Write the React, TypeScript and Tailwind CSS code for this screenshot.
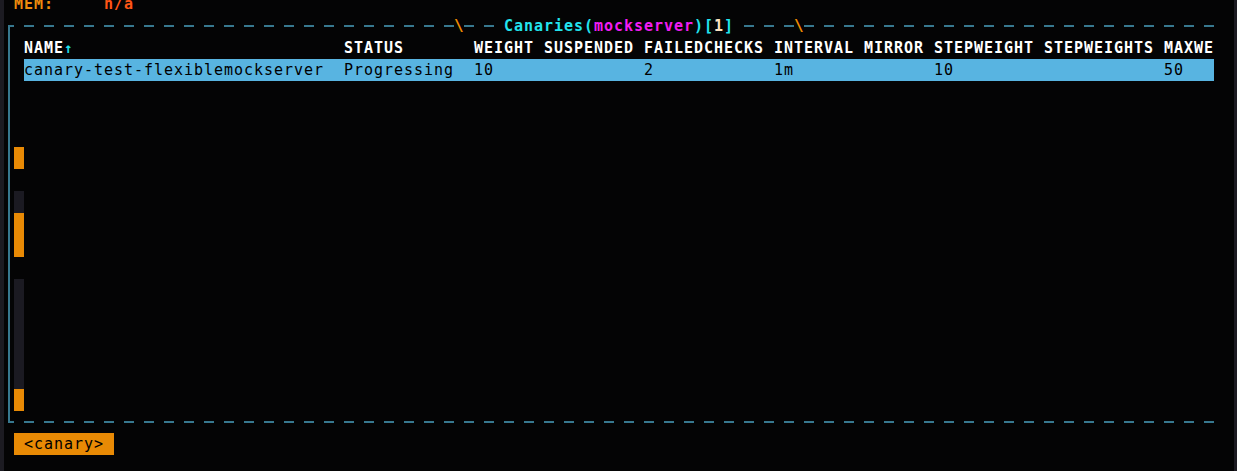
import React, { FC } from "react";

// dashed strip; "lead" says whether the first 10px of the strip is a dash or a gap
const Dashed: FC<{ width: string; lead: "dash" | "gap" }> = ({ width, lead }) => (
    <div className={`${width} h-[22px] shrink-0`}>
        <div
            className={`mt-[10px] h-[2px] ${lead === "dash"
                ? "bg-[repeating-linear-gradient(90deg,#37788f_0_10px,transparent_10px_20px)]"
                : "bg-[repeating-linear-gradient(90deg,transparent_0_10px,#37788f_10px_20px)]"}`}
        />
    </div>
);

const Slash: FC = () => (
    <span className="w-[10px] shrink-0 text-[#ef8a00] font-bold text-[16px]">\</span>
);

const columns = [
    "NAME",
    "STATUS",
    "WEIGHT",
    "SUSPENDED",
    "FAILEDCHECKS",
    "INTERVAL",
    "MIRROR",
    "STEPWEIGHT",
    "STEPWEIGHTS",
    "MAXWE",
];

const row = ["canary-test-flexiblemockserver", "Progressing", "10", "", "2", "1m", "", "10", "", "50"];

const gridCols = "grid grid-cols-[320px_130px_70px_100px_130px_90px_70px_110px_120px_50px]";

// marks drawn in the second column, one entry per inner row (rows 2..18)
const marks: ("none" | "orange" | "dark")[] = [
    "none", "none", "none", "none", "none",
    "orange",
    "none",
    "dark",
    "orange", "orange",
    "none",
    "dark", "dark", "dark", "dark", "dark",
    "orange",
];

const Marks: FC = () => (
    <div className="w-[10px] shrink-0 flex flex-col">
        {marks.map((m, i) => (
            <div
                key={i}
                className={`h-[22px] ${m === "orange" ? "bg-[#e88a05]" : m === "dark" ? "bg-[#1b1a22]" : ""}`}
            />
        ))}
    </div>
);

const Table: FC = () => (
    <div className="w-[1190px] shrink-0 flex flex-col">
        <div className={`${gridCols} h-[22px] text-white font-bold`}>
            {columns.map((c, i) => (
                <span key={c}>
                    {c}
                    {i === 0 && <span className="text-[#22e4ee] text-[14px]">↑</span>}
                </span>
            ))}
        </div>
        <div className={`${gridCols} h-[22px] bg-[#58b4e1] text-black`}>
            {row.map((v, i) => (
                <span key={i}>{v}</span>
            ))}
        </div>
    </div>
);

const App: FC = () => {
    return (
        <div className="w-[1237px] h-[471px] overflow-hidden flex bg-[#040405] font-['DejaVu_Sans_Mono',monospace] text-[15px] leading-[22px] tracking-[0.97px] whitespace-pre">
            <div className="w-[4px] shrink-0 bg-[#1c1b22]" />

            <div className="flex-1 flex flex-col -mt-[7px]">
                {/* stats line, mostly scrolled out of view */}
                <div className="h-[22px] flex font-bold">
                    <span className="w-[10px]" />
                    <span className="w-[90px] text-[#ef8d0d]">MEM:</span>
                    <span className="text-[#ff5516]">n/a</span>
                </div>

                {/* top border with title */}
                <div className="h-[22px] flex">
                    <div className="w-[10px] h-[22px] shrink-0 flex flex-col">
                        <div className="h-[10px]" />
                        <div className="flex-1 ml-[4px] border-l-2 border-t-2 border-[#37788f]" />
                    </div>
                    <Dashed width="w-[440px]" lead="gap" />
                    <Slash />
                    <Dashed width="w-[40px]" lead="dash" />
                    <div className="w-[230px] shrink-0 text-[#22e4ee] font-bold">
                        Canaries(<span className="text-[#f31cf3]">mockserver</span>)[<span className="text-[#fde3c2]">1</span>]
                    </div>
                    <Dashed width="w-[60px]" lead="gap" />
                    <Slash />
                    <Dashed width="w-[410px]" lead="dash" />
                </div>

                {/* inner area */}
                <div className="h-[374px] flex">
                    <div className="w-[10px] shrink-0">
                        <div className="h-full ml-[4px] border-l-2 border-[#37788f]" />
                    </div>
                    <Marks />
                    <Table />
                </div>

                {/* bottom border */}
                <div className="h-[22px] flex">
                    <div className="w-[10px] h-[22px] shrink-0">
                        <div className="h-[12px] ml-[4px] border-l-2 border-b-2 border-[#37788f]" />
                    </div>
                    <Dashed width="w-[1200px]" lead="gap" />
                </div>

                {/* crumbs */}
                <div className="h-[22px] flex">
                    <span className="w-[10px]" />
                    <span className="w-[100px] bg-[#e88a05] text-black"> &lt;canary&gt; </span>
                </div>
            </div>

            <div className="w-[3px] shrink-0 bg-[#1c1b22]" />
        </div>
    );
};

export default App;
